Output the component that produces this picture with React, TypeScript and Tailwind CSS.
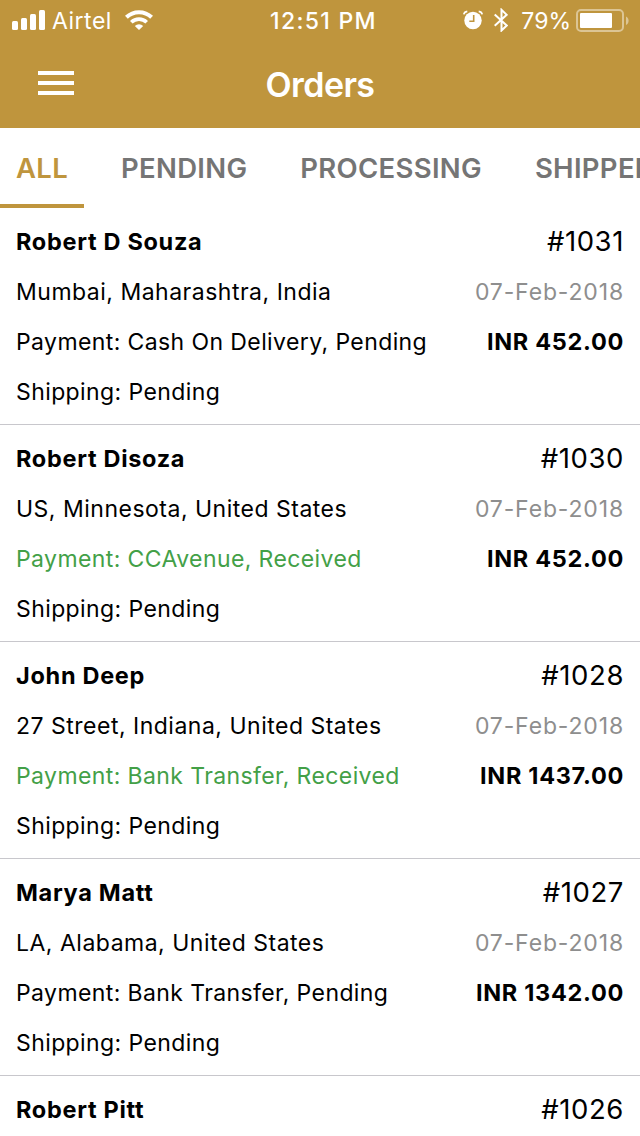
interface Order {
    name: string;
    id: string;
    address?: string;
    date?: string;
    payment?: string;
    received?: boolean;
    amount?: string;
    shipping?: string;
}

const orders: Order[] = [
    { name: 'Robert D Souza', id: '#1031', address: 'Mumbai, Maharashtra, India', date: '07-Feb-2018', payment: 'Cash On Delivery, Pending', amount: 'INR 452.00', shipping: 'Pending' },
    { name: 'Robert Disoza', id: '#1030', address: 'US, Minnesota, United States', date: '07-Feb-2018', payment: 'CCAvenue, Received', received: true, amount: 'INR 452.00', shipping: 'Pending' },
    { name: 'John Deep', id: '#1028', address: '27 Street, Indiana, United States', date: '07-Feb-2018', payment: 'Bank Transfer, Received', received: true, amount: 'INR 1437.00', shipping: 'Pending' },
    { name: 'Marya Matt', id: '#1027', address: 'LA, Alabama, United States', date: '07-Feb-2018', payment: 'Bank Transfer, Pending', amount: 'INR 1342.00', shipping: 'Pending' },
    { name: 'Robert Pitt', id: '#1026' },
];

const tabs = ['ALL', 'PENDING', 'PROCESSING', 'SHIPPED'];

const StatusBar = () => (
    <div className="grid h-10 grid-cols-3 items-center text-[23px] text-white">
        <div className="flex items-center pl-3">
            {/* Signal */}
            <svg width="33" height="20" viewBox="0 0 33 20" fill="currentColor">
                <rect x="0" y="11" width="6" height="9" rx="1.5" />
                <rect x="9" y="8" width="6" height="12" rx="1.5" />
                <rect x="18" y="4" width="6" height="16" rx="1.5" />
                <rect x="27" y="0" width="6" height="20" rx="1.5" />
            </svg>
            <span className="ml-[7px] w-[60px] pt-0.5 tracking-[0.5px]">Airtel</span>
            {/* Wifi */}
            <svg className="ml-[13px]" width="28" height="20" viewBox="0 0 28 20" fill="none" stroke="currentColor" strokeWidth="4">
                <path d="M1.4 7.300a18 18 0 0 1 25.200 0" />
                <path d="M6.300 12.300a11 11 0 0 1 15.400 0" strokeWidth="3.700" />
                <path d="M14 20l-4.200-4.100a6.200 6.200 0 0 1 8.400 0z" fill="currentColor" stroke="none" />
            </svg>
        </div>
        <div className="whitespace-nowrap pl-[7px] pt-0.5 text-center font-medium tracking-[1.3px]">12:51 PM</div>
        <div className="flex items-center justify-end pr-[11px]">
            {/* Alarm */}
            <svg width="20" height="20" viewBox="0 0 20 20" fill="currentColor">
                <circle cx="10" cy="10.500" r="8.700" />
                <path d="M0.800 4.300Q1.300 1.700 4.300 1.300M19.200 4.300Q18.700 1.700 15.700 1.300" fill="none" stroke="currentColor" strokeWidth="1.700" />
                <path d="M10.700 5v6.300H6.300" fill="none" stroke="#bf953d" strokeWidth="1.600" />
            </svg>
            {/* Bluetooth */}
            <svg className="ml-[11px]" width="14" height="24" viewBox="0 0 14 24" fill="none" stroke="currentColor" strokeWidth="2">
                <path d="M0.700 6.500l12 11-5.200 5V1.800l5.200 5-12 11" />
            </svg>
            <span className="ml-[13px] pt-0.5">79%</span>
            {/* Battery */}
            <svg className="ml-[5px]" width="53" height="24" viewBox="0 0 53 24" fill="currentColor">
                <rect x="1" y="2" width="46" height="21" rx="4" fill="none" stroke="currentColor" strokeWidth="2" opacity="0.450" />
                <rect x="4" y="5" width="32" height="15" rx="1" />
                <path d="M50 8.500c3.500 1.500 3.500 7 0 8.500z" opacity="0.450" />
            </svg>
        </div>
    </div>
);

const OrderRow = ({ order }: { order: Order }) => (
    <div className="h-[217px] border-b border-[#c8c7cc] px-4 pt-[9px] text-[23px] tracking-[0.4px]">
        <div className="flex h-[50px] items-center justify-between">
            <span className="text-[23.5px] font-bold tracking-[0.7px]">{order.name}</span>
            <span className="text-[27.5px] tracking-[0.6px]">{order.id}</span>
        </div>
        {order.address && (
            <>
                <div className="flex h-[50px] items-center justify-between">
                    <span className="tracking-[0.5px]">{order.address}</span>
                    <span className="tracking-[0.85px] text-[#8e8e8e]">{order.date}</span>
                </div>
                <div className="flex h-[50px] items-center justify-between">
                    <span className={order.received ? 'text-[#43a047]' : ''}>Payment: {order.payment}</span>
                    <span className="text-[23.5px] font-bold tracking-[0.7px]">{order.amount}</span>
                </div>
                <div className="flex h-[50px] items-center">Shipping: {order.shipping}</div>
            </>
        )}
    </div>
);

export default function App() {
    return (
        <div className="h-[1136px] w-[640px] overflow-hidden bg-white font-['Inter',sans-serif] text-black">
            <header className="h-32 bg-[#bf953d] text-white">
                <StatusBar />
                <div className="grid h-[86px] grid-cols-3 items-center">
                    <div className="ml-[38px] flex w-9 flex-col gap-1.5">
                        <div className="h-1 bg-white" />
                        <div className="h-1 bg-white" />
                        <div className="h-1 bg-white" />
                    </div>
                    <h1 className="pt-0.5 text-center text-[34px] font-semibold tracking-[-0.6px]">Orders</h1>
                </div>
            </header>
            <nav className="flex h-20 gap-[21px] whitespace-nowrap text-[27.5px] font-semibold tracking-[0.3px] text-[#757575]">
                {tabs.map((tab) => (
                    <div key={tab} className={`shrink-0 px-4 pt-5 ${tab === 'ALL' ? 'w-[84px] border-b-4 border-[#bf953d] text-[#bf953d]' : ''}`}>{tab}</div>
                ))}
            </nav>
            {orders.map((order) => (
                <OrderRow key={order.id} order={order} />
            ))}
        </div>
    );
}
